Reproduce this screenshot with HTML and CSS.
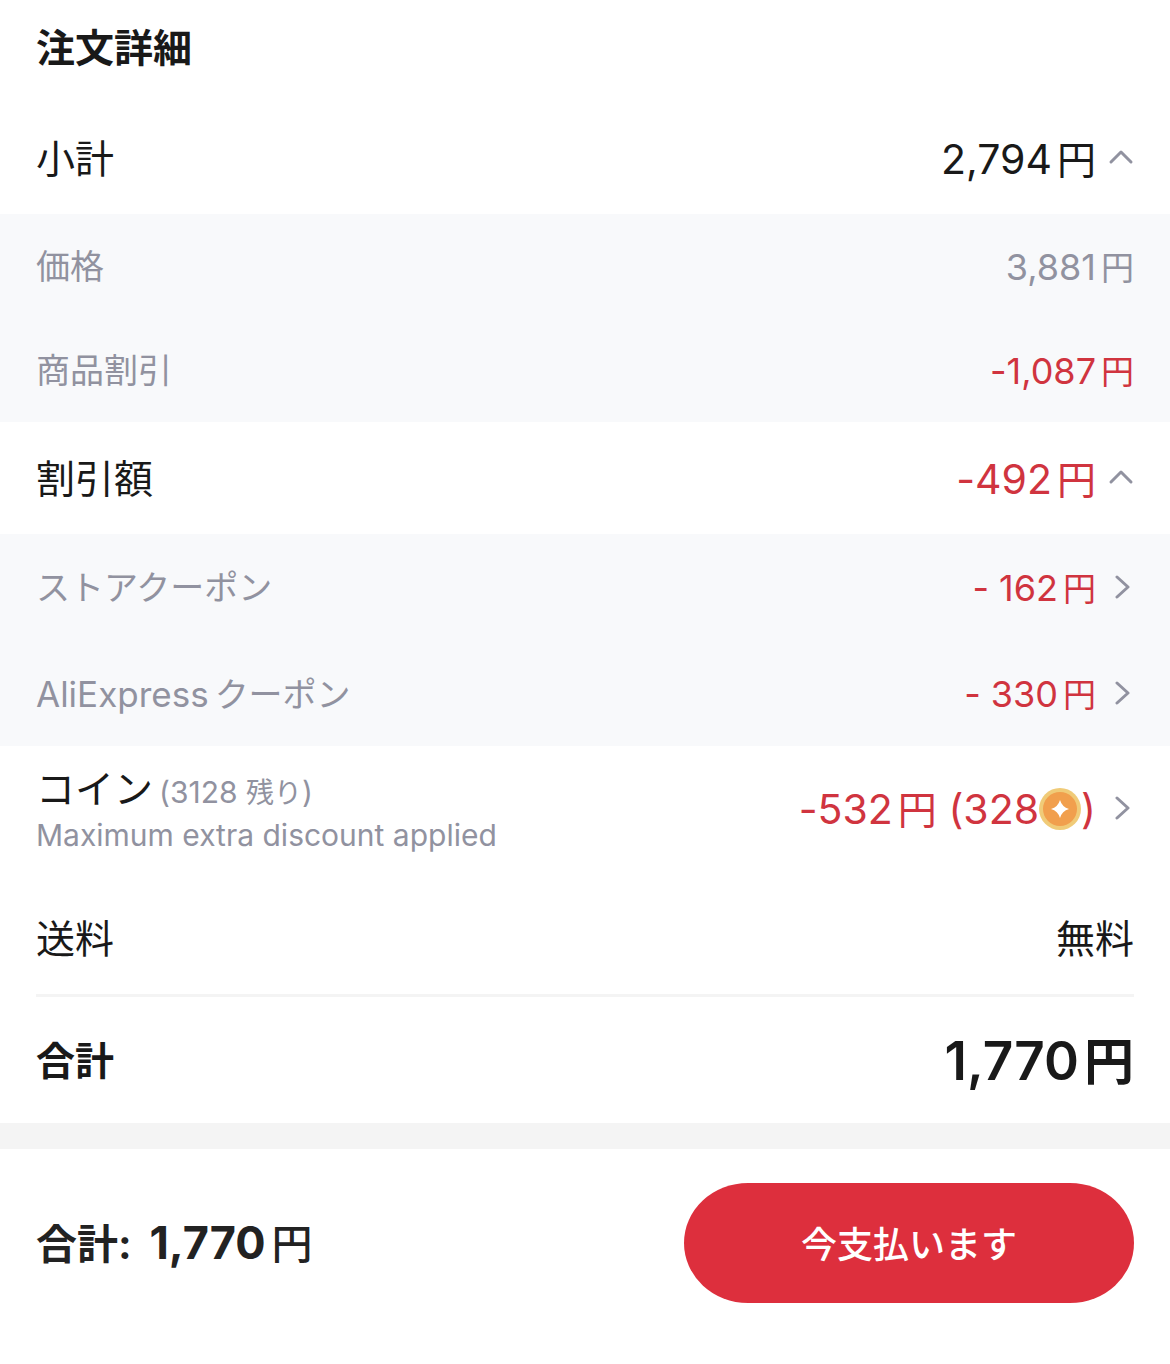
FILE: index.html
```html
<!DOCTYPE html>
<html lang="ja">
<head>
    <meta charset="UTF-8">
    <meta name="viewport" content="width=device-width, initial-scale=1.0">
    <title>注文詳細</title>
    <link rel="stylesheet" href="styles.css">
</head>
<body>
    <main>
        <h1 class="title">注文詳細</h1>

        <button class="row" type="button" aria-expanded="true">
            <span class="label">小計</span>
            <span class="value">2,794<span class="yen">円</span></span>
            <svg class="arrow" viewBox="0 0 26 26"><path d="M3 16 13 6l10 10"/></svg>
        </button>
        <div class="panel">
            <div class="row">
                <span class="label">価格</span>
                <span class="value gray">3,881<span class="yen">円</span></span>
            </div>
            <div class="row">
                <span class="label">商品割引</span>
                <span class="value red">-1,087<span class="yen">円</span></span>
            </div>
        </div>

        <button class="row" type="button" aria-expanded="true">
            <span class="label">割引額</span>
            <span class="value red">-492<span class="yen">円</span></span>
            <svg class="arrow" viewBox="0 0 26 26"><path d="M3 16 13 6l10 10"/></svg>
        </button>
        <div class="panel coupons">
            <button class="row" type="button">
                <span class="label">ストアクーポン</span>
                <span class="value red">- 162<span class="yen">円</span></span>
                <svg class="arrow" viewBox="0 0 26 26"><path d="m9 2 11 10-11 10"/></svg>
            </button>
            <button class="row" type="button">
                <span class="label"><span class="latin">AliExpress</span>クーポン</span>
                <span class="value red">- 330<span class="yen">円</span></span>
                <svg class="arrow" viewBox="0 0 26 26"><path d="m9 2 11 10-11 10"/></svg>
            </button>
        </div>

        <button class="row coins" type="button">
            <span class="label">
                <span class="coins-name">コイン<span class="left">(3128 <span class="left-word">残り</span>)</span></span>
                <span class="note">Maximum extra discount applied</span>
            </span>
            <span class="value red">-532<span class="yen">円</span> (328<svg class="coin" viewBox="0 0 42 42">
                <circle cx="21" cy="21" r="21" fill="#f0cb78"/>
                <circle cx="21" cy="21" r="17" fill="#f19f4d"/>
                <path fill="#fff" d="M21 12q2 7 9 9-7 2-9 9-2-7-9-9 7-2 9-9z"/>
            </svg>)</span>
            <svg class="arrow" viewBox="0 0 26 26"><path d="m9 2 11 10-11 10"/></svg>
        </button>

        <div class="row">
            <span class="label">送料</span>
            <span class="value free">無料</span>
        </div>
        <hr>
        <div class="row total">
            <span class="label">合計</span>
            <span class="value">1,770<span class="yen">円</span></span>
        </div>
    </main>

    <footer class="pay-bar">
        <p class="pay-total">合計: <span class="pay-amount">1,770</span><span class="pay-yen">円</span></p>
        <button class="pay" type="button">今支払います</button>
    </footer>
</body>
</html>
```
FILE: styles.css
```css
* {
    box-sizing: border-box;
}

body {
    margin: 0;
    background: #fff;
    color: #191919;
    font-family: Inter, "Noto Sans CJK JP", sans-serif;
    /* keeps the minus sign at its normal height next to digits */
    font-variant-ligatures: no-contextual;
}

button {
    border: none;
    background: none;
    color: inherit;
    font: inherit;
    font-variant-ligatures: inherit;
    text-align: left;
    cursor: pointer;
}

.title {
    margin: 0;
    padding: 18px 36px 24px;
    font-size: 39px;
    font-weight: 700;
    line-height: 60px;
}

.row {
    display: flex;
    align-items: center;
    width: 100%;
    min-height: 112px;
    padding: 2px 36px 0;
    font-size: 39px;
    line-height: 48px;
}

.label {
    flex: 1;
}

.value {
    font-size: 41px;
    white-space: nowrap;
}

.yen {
    margin-left: 5px;
    font-size: 39px;
}

.gray {
    color: #9192a0;
}

.red {
    color: #d0343f;
}

.arrow {
    flex: none;
    width: 26px;
    height: 26px;
    margin-left: 12px;
    fill: none;
    stroke: #9192a0;
    stroke-width: 3;
    stroke-linecap: round;
    stroke-linejoin: round;
}

.panel {
    background: #f8f9fb;
}

.panel .row {
    min-height: 104px;
    font-size: 34px;
}

.panel.coupons .row {
    min-height: 106px;
}

.panel .label,
.left,
.note {
    color: #9192a0;
}

.panel .value {
    font-size: 36px;
}

.latin {
    margin-right: 6px;
    font-size: 35px;
}

.panel .yen {
    margin-left: 5px;
    font-size: 33px;
}

.coins {
    min-height: 126px;
    margin-bottom: 10px;
    padding-top: 0;
}

.coins-name,
.note {
    display: block;
}

.left {
    margin-left: 6px;
    font-size: 30px;
}

.left-word {
    font-size: 28px;
}

.note {
    font-size: 30px;
    line-height: 36px;
}

.coin {
    width: 42px;
    height: 42px;
    vertical-align: -6px;
}

.free {
    font-size: 39px;
}

hr {
    height: 3px;
    margin: 0 36px;
    border: none;
    background: #f4f4f4;
}

.total {
    min-height: 126px;
    font-weight: 700;
}

.total .value {
    font-size: 53px;
    font-weight: 600;
}

.total .yen {
    font-size: 50px;
}

.pay-bar {
    display: flex;
    align-items: center;
    justify-content: space-between;
    padding: 34px 36px 61px;
    border-top: 26px solid #f4f4f4;
}

.pay-total {
    margin: 0;
    color: #222;
    font-size: 41px;
    font-weight: 700;
    line-height: 48px;
}

.pay-amount {
    margin-left: 8px;
    font-size: 45px;
}

.pay-yen {
    margin-left: 6px;
    font-weight: 500;
}

.pay {
    width: 41%;
    height: 120px;
    padding: 0 0 2px;
    border-radius: 64px / 60px;
    background: #dd2f3d;
    color: #fff;
    font-size: 36px;
    font-weight: 500;
    text-align: center;
}
```
